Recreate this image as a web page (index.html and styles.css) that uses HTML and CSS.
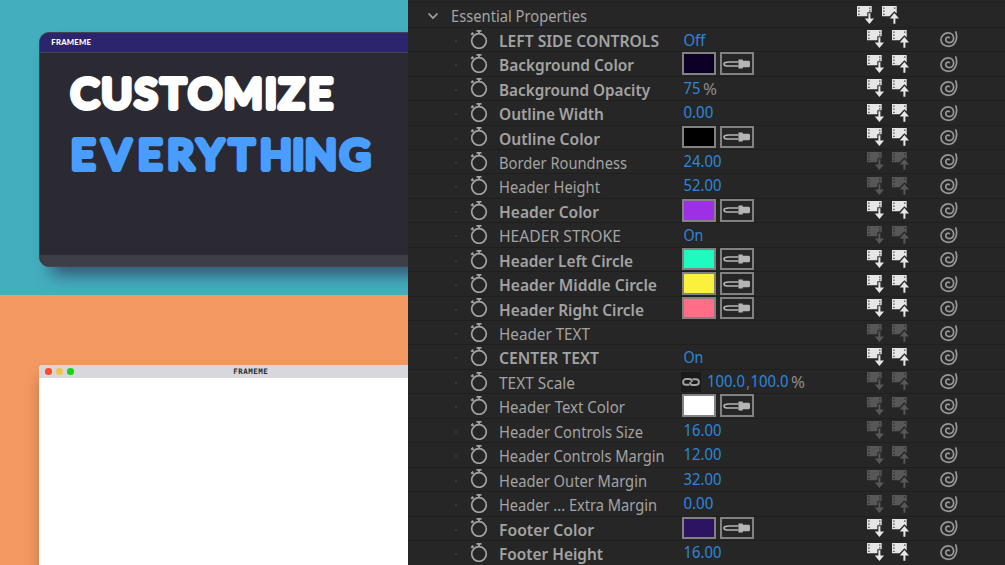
FILE: index.html
```html
<!DOCTYPE html>
<html lang="en">
<head>
    <meta charset="utf-8">
    <title>Frameme</title>
    <link rel="stylesheet" href="styles.css">
</head>
<body>

    <svg class="sprite">
        <symbol id="stopwatch" viewBox="0 0 18 20">
            <circle cx="9" cy="12" r="7.3" fill="none" stroke="currentColor" stroke-width="1.7"/>
            <path d="M6.5 1.8h5M9 2v3M1.8 4.2l1.6 1.6M1.2 5.6l2-2" fill="none" stroke="currentColor" stroke-width="1.8"/>
        </symbol>
        <symbol id="film-down" viewBox="0 0 17 18">
            <path fill-rule="evenodd" fill="currentColor" d="M0 0h14.7v6.3h-4.4v4H0zM1.3 1.5v1.2h1.2V1.5zM1.3 4.6v1.2h1.2V4.6zM1.3 7.7v1.2h1.2V7.7zM12.2 1.5v1.2h1.2V1.5zM12.2 4.3v1.2h1.2V4.3z"/>
            <path fill="currentColor" d="M11.4 7.3h2v5.2H17l-4.6 5.4-4.6-5.4h3.6z"/>
        </symbol>
        <symbol id="film-up" viewBox="0 0 17 18">
            <path fill-rule="evenodd" fill="currentColor" d="M0 0h14.7v7.6l-2.3-2.3-4.8 5H0zM1.3 1.5v1.2h1.2V1.5zM1.3 4.6v1.2h1.2V4.6zM1.3 7.7v1.2h1.2V7.7zM12.2 1.5v1.2h1.2V1.5z"/>
            <path fill="currentColor" d="M12.4 7l4.6 5.4h-3.6v5.4h-2v-5.4H7.8z"/>
        </symbol>
        <symbol id="spiral" viewBox="0 0 18 18">
            <path d="M15.8 2C18.2 8.5 15 16.3 8.5 16.3C4 16.3 1 13.3 1 9.8C1 5.8 4.5 2.8 8 2.8C11.5 2.8 13.6 5.3 13.6 8C13.6 11 11.5 12.6 9.2 12.6C7 12.6 5.7 11.2 5.8 9.5C5.9 7.8 7.5 6.6 9.2 7.6" fill="none" stroke="currentColor" stroke-width="1.7" stroke-linecap="round"/>
        </symbol>
        <symbol id="dropper" viewBox="0 0 28 10">
            <path d="M16 2.9H6C3.5 2.9 1 3.7 1 5s2.5 2.1 5 2.1h10" fill="none" stroke="currentColor" stroke-width="1.7"/>
            <path fill="currentColor" d="M16 .3h4.500v1.400H27l1 1v4.600l-1 1h-6.500v1.400H16z"/>
        </symbol>
        <symbol id="link" viewBox="0 0 18 10">
            <path d="M7.5 7.8H4a2.900 2.900 0 0 1 0-5.800h3.500c1.500 0 2.300 1.300 2.300 3M10.500 2.200H14a2.900 2.900 0 0 1 0 5.800h-3.500C9 8 8.200 6.700 8.200 5" fill="none" stroke="currentColor" stroke-width="1.9"/>
        </symbol>
    </svg>

    <div class="page">
        <div class="previews">
            <div class="preview teal">
                <div class="window dark">
                    <div class="titlebar">FRAMEME</div>
                    <div class="content">
                        <svg class="headline" width="340" height="130">
                            <text y="55" x="31 61.5 94.8 121 148.6 184 225 239 268.5">CUSTOMIZE</text>
                            <text class="blue" y="115.5" x="31 62.5 98 127.500 157.5 189.5 220 252.5 265 300">EVERYTHING</text>
                        </svg>
                    </div>
                    <div class="footer"></div>
                </div>
            </div>
            <div class="preview orange">
                <div class="window light">
                    <div class="titlebar">
                        <i class="dot red"></i><i class="dot yellow"></i><i class="dot green"></i>
                        <span class="title">FRAMEME</span>
                    </div>
                </div>
            </div>
        </div>

        <div class="panel">
            <div class="group">
                <svg class="chevron" viewBox="0 0 12 8"><path d="M1.5 1.5L6 6l4.5-4.5"/></svg>
                <svg class="label"><text x="0" y="19.8" textLength="136" lengthAdjust="spacingAndGlyphs">Essential Properties</text></svg>
                <svg class="film"><use href="#film-down"/></svg>
                <svg class="film"><use href="#film-up"/></svg>
            </div>
            <div id="rows"></div>
        </div>
    </div>

    <script src="rows.js"></script>
</body>
</html>
```
FILE: styles.css
```css
body {
    margin: 0;
    overflow: hidden;
    background: #262626;
    font-family: "Noto Sans", "Open Sans", sans-serif;
}
.sprite {
    display: none;
}
.page {
    display: flex;
    width: 1005px;
    height: 565px;
    overflow: hidden;
}

/* left side */
.previews {
    width: 408.4px;
    flex: none;
    overflow: hidden;
}
.preview {
    box-sizing: border-box;
    padding-left: 39.3px;
    overflow: hidden;
}
.teal {
    height: 294.6px;
    padding-top: 32.3px;
    background: #43aebe;
}
.orange {
    height: 271px;
    padding-top: 70.6px;
    background: #f49961;
}
.window {
    box-sizing: border-box;
    width: 424px;
    overflow: hidden;
}
.dark {
    display: flex;
    flex-direction: column;
    height: 235.2px;
    border: 1px solid #43434f;
    border-radius: 10px;
    background: #2b2a33;
    box-shadow: 8px 12px 16px -4px rgba(45, 50, 85, 0.7);
}
.dark .titlebar {
    height: 18.5px;
    padding-left: 11px;
    border-bottom: 1px solid #43434f;
    background: #2c246d;
    color: white;
    font: 900 7.7px/19px Lato, sans-serif;
    letter-spacing: 0.25px;
}
.content {
    flex: 1;
}
.headline {
    display: block;
    font-family: Lato, sans-serif;
    font-size: 41.5px;
    fill: white;
    stroke: white;
    stroke-width: 6px;
    stroke-linejoin: round;
    stroke-linecap: round;
}
.headline .blue {
    fill: #489dff;
    stroke: #489dff;
}
.footer {
    height: 11.5px;
    background: #3e3e49;
}
.light {
    height: 260px;
    border-radius: 4px;
    background: white;
    box-shadow: 2px 12px 16px rgba(120, 60, 40, 0.5);
}
.light .titlebar {
    display: flex;
    align-items: center;
    gap: 4.4px;
    height: 12.5px;
    padding-left: 6px;
    background: #d8d7dd;
}
.dot {
    width: 6.6px;
    height: 6.6px;
    border-radius: 50%;
}
.red {
    background: #fc4b2c;
}
.yellow {
    background: #f1c351;
}
.green {
    background: #18d60d;
}
.title {
    margin-left: 155px;
    color: #29292c;
    font: bold 7.5px "DejaVu Sans Mono", monospace;
    letter-spacing: 0.5px;
}

/* properties panel */
.panel {
    flex: 1;
    color: #a3a3a3;
}
.group, .row {
    display: flex;
    align-items: flex-start;
    box-sizing: border-box;
    height: 24.45px;
    border-top: 1px solid #1f1f1f;
}
.group {
    margin-top: 2.35px;
}
.chevron {
    width: 12px;
    height: 8px;
    margin: 8.5px 12px 0 19px;
    fill: none;
    stroke: #a3a3a3;
    stroke-width: 1.7px;
}
.label {
    width: 184px;
    height: 24px;
    flex: none;
    margin-top: -1px;
    overflow: visible;
    fill: #a3a3a3;
    font-size: 16.4px;
}
.group .label {
    width: 406px;
}
.bold {
    font-weight: 600;
}
.key {
    width: 2px;
    height: 2px;
    margin: 12px 14px 0 46.4px;
    background: #3b3b3b;
}
.stopwatch {
    width: 18px;
    height: 20px;
    margin: 0.8px 10.8px 0 -0.6px;
    flex: none;
}
.value {
    display: flex;
    width: 184px;
    height: 23px;
    flex: none;
}
.value text {
    fill: #2d86dc;
    font-size: 16px;
}
.value .unit {
    fill: #8c8c8c;
}
.number {
    width: 150px;
    height: 24px;
    margin-top: -1px;
    overflow: visible;
}
.swatch, .pick {
    box-sizing: border-box;
    width: 34.5px;
    height: 22.7px;
    margin-left: -1px;
    border: 2px solid #828282;
}
.pick {
    margin-left: 3.2px;
    padding: 4.5px 1.8px;
    color: #b5b5b5;
}
.pick svg, .chain svg {
    display: block;
    width: 27px;
    height: 10px;
}
.chain {
    width: 20px;
    height: 20px;
    margin: 2.5px 0 0 -2px;
    background: #1a1a1a;
}
.chain svg {
    width: 18px;
    margin: 5px 1px;
}
.film {
    width: 17px;
    height: 18px;
    margin: 2.5px 8px 0 0;
    flex: none;
    color: #e6e6e6;
}
.dim {
    color: #575757;
}
.spiral {
    width: 18px;
    height: 18px;
    margin: 2.5px 0 0 23.4px;
    color: #989898;
}
```
FILE: rows.js
```js
// label, label width, bold, value
const rows = [
    ["LEFT SIDE CONTROLS", 160, true, "Off"],
    ["Background Color", 135, true, "#0d0027"],
    ["Background Opacity", 151, true, "75"],
    ["Outline Width", 105, true, "0.00"],
    ["Outline Color", 101, true, "#000000"],
    ["Border Roundness", 128, false, "24.00"],
    ["Header Height", 101, false, "52.00"],
    ["Header Color", 100, true, "#9d30e6"],
    ["HEADER STROKE", 122, false, "On"],
    ["Header Left Circle", 134, true, "#1dfcc0"],
    ["Header Middle Circle", 158, true, "#fbf03e"],
    ["Header Right Circle", 145, true, "#ff6d87"],
    ["Header TEXT", 91, false, ""],
    ["CENTER TEXT", 100, true, "On"],
    ["TEXT Scale", 76, false, "scale"],
    ["Header Text Color", 126, false, "#ffffff"],
    ["Header Controls Size", 144, false, "16.00"],
    ["Header Controls Margin", 165.5, false, "12.00"],
    ["Header Outer Margin", 148, false, "32.00"],
    ["Header ... Extra Margin", 158, false, "0.00"],
    ["Footer Color", 95, true, "#2d1463"],
    ["Footer Height", 104, true, "16.00"]
];

const widths = { "Off": 22, "On": 20, "75": 17, "0.00": 30 };

function text(x, y, width, str, cls) {
    return `<text class="${cls || ""}" x="${x}" y="${y}" textLength="${width}" lengthAdjust="spacingAndGlyphs">${str}</text>`;
}

function value(v) {
    if (v[0] === "#") {
        return `<div class="swatch" style="background: ${v}"></div>
            <div class="pick"><svg><use href="#dropper"/></svg></div>`;
    }
    if (v === "scale") {
        return `<div class="chain"><svg><use href="#link"/></svg></div>
            <svg class="number">${text(6, 17.6, 38, "100.0")}${text(45.5, 19.3, 3, ",", "unit")}${text(49.5, 17.6, 38, "100.0")}${text(90, 19.3, 14, "%", "unit")}</svg>`;
    }
    if (v === "") {
        return "";
    }
    const y = v[0] === "O" ? 18.5 : 17.5;
    const unit = v === "75" ? text(20, 18.8, 14, "%", "unit") : "";
    return `<svg class="number">${text(0.4, y, widths[v] || 38, v)}${unit}</svg>`;
}

document.getElementById("rows").innerHTML = rows.map(([label, width, bold, v]) => `
    <div class="row">
        <i class="key"></i>
        <svg class="stopwatch"><use href="#stopwatch"/></svg>
        <svg class="label ${bold ? "bold" : ""}">${text(0, 20.2, width, label)}</svg>
        <div class="value">${value(v)}</div>
        <svg class="film ${bold ? "" : "dim"}"><use href="#film-down"/></svg>
        <svg class="film ${bold ? "" : "dim"}"><use href="#film-up"/></svg>
        <svg class="spiral"><use href="#spiral"/></svg>
    </div>`).join("");
```
